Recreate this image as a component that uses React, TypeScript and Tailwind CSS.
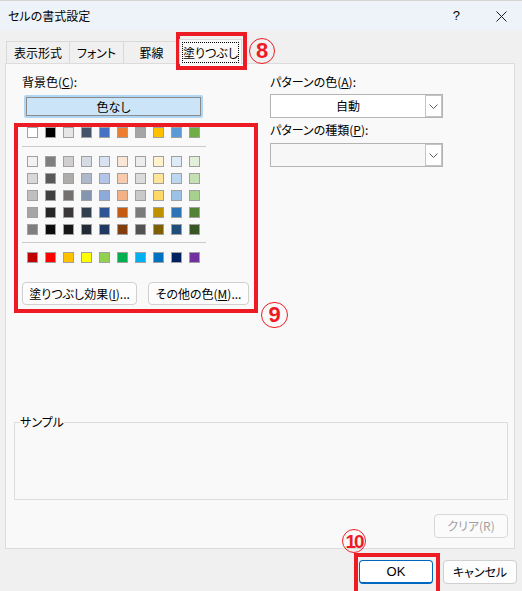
import React from "react";

const theme = ["#ffffff", "#000000", "#e7e6e6", "#44546a", "#4472c4", "#ed7d31", "#a5a5a5", "#ffc000", "#5b9bd5", "#70ad47"];
const tints = [
  ["#f2f2f2", "#7f7f7f", "#d0cece", "#d6dce4", "#d9e2f3", "#fbe5d5", "#ededed", "#fff2cc", "#deebf6", "#e2efd9"],
  ["#d8d8d8", "#595959", "#aeabab", "#adb9ca", "#b4c6e7", "#f7cbac", "#dbdbdb", "#fee599", "#bdd7ee", "#c5e0b3"],
  ["#bfbfbf", "#3f3f3f", "#757070", "#8496b0", "#8eaadb", "#f4b183", "#c9c9c9", "#ffd965", "#9cc3e5", "#a8d08d"],
  ["#a5a5a5", "#262626", "#3a3838", "#323f4f", "#2f5496", "#c55a11", "#7b7b7b", "#bf9000", "#2e75b5", "#538135"],
  ["#7f7f7f", "#0c0c0c", "#171616", "#222a35", "#1f3864", "#833c0b", "#525252", "#7f6000", "#1e4e79", "#375623"],
];
const standard = ["#c00000", "#ff0000", "#ffc000", "#ffff00", "#92d050", "#00b050", "#00b0f0", "#0070c0", "#002060", "#7030a0"];

function SwatchRow({ colors }: { colors: string[] }) {
  return (
    <div className="flex gap-[7px]">
      {colors.map((c, i) => (
        <div key={i} className="w-[11px] h-[11px] border border-[#a0a0a0]" style={{ background: c }} />
      ))}
    </div>
  );
}

function Chevron() {
  return (
    <svg width="9" height="5" viewBox="0 0 9 5" fill="none">
      <path d="M0.5 0.5 L4.5 4.5 L8.5 0.5" stroke="#606060" strokeWidth="1" />
    </svg>
  );
}

function Dropdown({ text, disabled }: { text?: string; disabled?: boolean }) {
  return (
    <div className={`flex h-[24px] border border-[#b4b4b4] ${disabled ? "bg-[#f7f7f7]" : "bg-white"}`}>
      <div className="flex-1 flex items-center justify-center">{text}</div>
      <div className="w-[17px] border border-[#c4c4c4] bg-white flex items-center justify-center">
        <Chevron />
      </div>
    </div>
  );
}

function Circled({ n, cls }: { n: string; cls: string }) {
  return (
    <div
      className={`absolute rounded-full border-[1.5px] border-[#ed1c24] text-[#ed1c24] flex items-center justify-center font-['Liberation_Sans',sans-serif] font-bold leading-none ${cls}`}
    >
      {n}
    </div>
  );
}

export default function App() {
  return (
    <div className="relative w-[522px] h-[591px] overflow-hidden bg-[#f0f0f0] text-[12px] text-black font-['Noto_Sans_CJK_JP','Noto_Sans',sans-serif] [font-feature-settings:'palt'] flex flex-col">
      {/* title bar */}
      <div className="h-[31px] bg-[#eef3f9] flex items-center pl-[8px] border-t border-[#d4d4d4]">
        <span className="text-[12px]">セルの書式設定</span>
        <span className="ml-auto text-[13px] mr-[36px] font-['Liberation_Sans',sans-serif]">?</span>
        <svg width="11" height="11" viewBox="0 0 11 11" className="mr-[15px]">
          <path d="M0.5 0.5 L10.5 10.5 M10.5 0.5 L0.5 10.5" stroke="#1a1a1a" strokeWidth="1" />
        </svg>
      </div>

      {/* tabs */}
      <div className="flex items-end pl-[6px] h-[32px]">
        <div className="w-[64px] h-[22px] border border-b-0 border-[#d9d9d9] bg-[#f0f0f0] flex items-center justify-center">表示形式</div>
        <div className="w-[55px] -ml-px h-[22px] border border-b-0 border-[#d9d9d9] bg-[#f0f0f0] flex items-center justify-center">フォント</div>
        <div className="w-[57px] -ml-px h-[22px] border border-b-0 border-[#d9d9d9] bg-[#f0f0f0] flex items-center justify-center">罫線</div>
        <div className="w-[63px] -ml-px h-[25px] -mb-px relative z-10 border border-b-0 border-[#d9d9d9] bg-[#f9f9f9] flex items-center justify-center px-[2px] pt-[2px] pb-[1px]">
          <div className="w-full h-full border border-dotted border-black flex items-center justify-center">塗りつぶし</div>
        </div>
      </div>

      {/* panel */}
      <div className="ml-[5px] w-[510px] h-[486px] border border-[#dcdcdc] bg-[#f9f9f9] flex flex-col">
        <div className="flex pt-[10px] pl-[16px]">
          {/* left column */}
          <div className="w-[248px] flex flex-col">
            <div className="h-[16px] leading-[16px]">
              背景色(<span className="underline">C</span>):
            </div>
            <div className="mt-[5px] ml-[2px] w-[179px] h-[23px] border-[2px] border-[#b0d6f5] rounded-[2px]">
              <div className="w-full h-full border border-[#8a8a8a] bg-[#cce4f7] flex items-center justify-center">色なし</div>
            </div>
            <div className="mt-[9px] ml-[5px]">
              <SwatchRow colors={theme} />
            </div>
            <div className="mt-[8px] w-[184px] h-px bg-[#cacaca]" />
            <div className="mt-[9px] ml-[5px] flex flex-col gap-[6px]">
              {tints.map((r, i) => (
                <SwatchRow key={i} colors={r} />
              ))}
            </div>
            <div className="mt-[7px] w-[184px] h-px bg-[#cacaca]" />
            <div className="mt-[9px] ml-[5px]">
              <SwatchRow colors={standard} />
            </div>
            <div className="mt-[19px] flex gap-[11px]">
              <div className="w-[115px] h-[23px] border border-[#d0d0d0] rounded-[4px] bg-[#fdfdfd] flex items-center justify-center">
                塗りつぶし効果(<span className="underline">I</span>)...
              </div>
              <div className="w-[101px] h-[23px] border border-[#d0d0d0] rounded-[4px] bg-[#fdfdfd] flex items-center justify-center">
                その他の色(<span className="underline">M</span>)...
              </div>
            </div>
          </div>

          {/* right column */}
          <div className="w-[173px] flex flex-col">
            <div className="h-[16px] leading-[16px]">
              パターンの色(<span className="underline">A</span>):
            </div>
            <div className="mt-[4px]">
              <Dropdown text="自動" />
            </div>
            <div className="mt-[4px] h-[16px] leading-[16px]">
              パターンの種類(<span className="underline">P</span>):
            </div>
            <div className="mt-[5px]">
              <Dropdown disabled />
            </div>
          </div>
        </div>

        {/* sample */}
        <div className="relative mt-[117px] ml-[8px] w-[494px] h-[78px] border border-[#dcdcdc]">
          <span className="absolute -top-[9px] left-[5px] bg-[#f9f9f9] leading-[16px]">サンプル</span>
        </div>

        <div className="mt-[14px] self-end mr-[6px] w-[74px] h-[24px] border border-[#d8d8d8] rounded-[4px] bg-[#fbfbfb] text-[#a0a0a0] flex items-center justify-center">
          クリア(R)
        </div>
      </div>

      {/* bottom buttons */}
      <div className="mt-[11px] flex justify-end gap-[10px] pr-[5px]">
        <div className="w-[74px] h-[24px] border border-[#0067c0] border-b-[2px] rounded-[4px] bg-white flex items-center justify-center font-['Liberation_Sans',sans-serif] text-[13px]">
          OK
        </div>
        <div className="w-[74px] h-[24px] border border-[#d0d0d0] rounded-[4px] bg-[#fdfdfd] flex items-center justify-center">
          キャンセル
        </div>
      </div>

      {/* annotations */}
      <div className="absolute left-[176px] top-[32px] w-[71px] h-[38px] border-[4px] border-[#ed1c24]" />
      <Circled n="8" cls="left-[249px] top-[38px] w-[26px] h-[26px] text-[22px]" />
      <div className="absolute left-[14px] top-[123px] w-[244px] h-[190px] border-[4px] border-[#ed1c24]" />
      <Circled n="9" cls="left-[261px] top-[302px] w-[27px] h-[26px] text-[22px]" />
      <div className="absolute left-[354px] top-[553px] w-[86px] h-[42px] border-[4px] border-[#ed1c24]" />
      <Circled n="10" cls="left-[342px] top-[529px] w-[24px] h-[24px] text-[19px] tracking-[-2px]" />
    </div>
  );
}
